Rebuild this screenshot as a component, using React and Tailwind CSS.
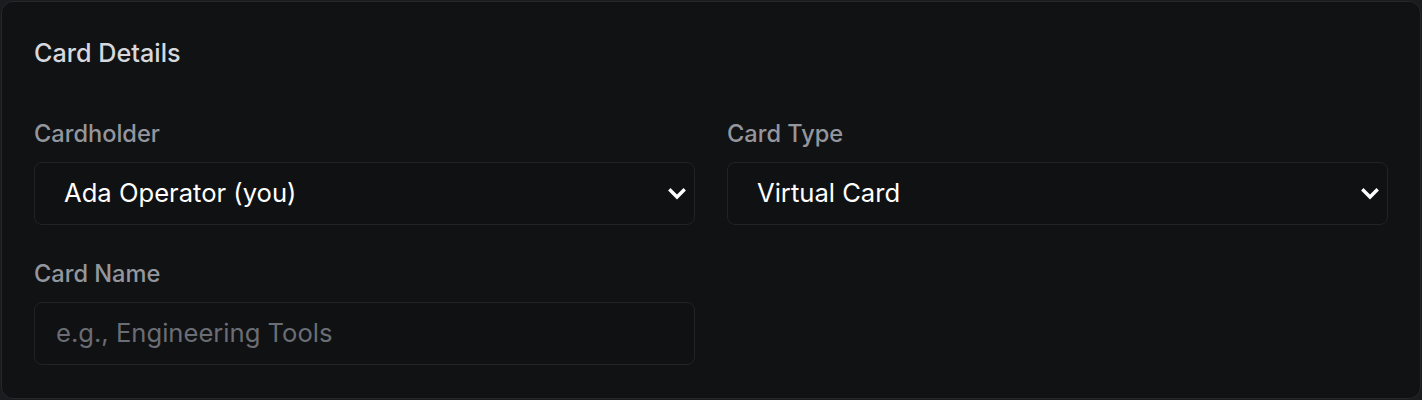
import React from "react";

function Chevron() {
  return (
    <svg width="18" height="12" viewBox="0 0 18 12" className="shrink-0">
      <polyline points="2.5,2.5 9,9 15.5,2.5" fill="none" stroke="#ffffff" strokeWidth="3.4" strokeLinecap="square" strokeLinejoin="miter" />
    </svg>
  );
}

function SelectBox({ value }) {
  return (
    <div className="flex h-[63px] items-center justify-between rounded-[8px] border border-[#222327] bg-[#101113] pl-[29px] pr-[8px] text-[25.6px] text-white">
      <span>{value}</span>
      <Chevron />
    </div>
  );
}

function Label({ children }) {
  return <div className="mb-[13px] h-[30px] text-[23.6px] leading-[30px] font-medium text-[#94969d]">{children}</div>;
}

export default function App() {
  return (
    <div className="h-[400px] w-[1422px] bg-[#1b1c1f] p-px" style={{ fontFamily: "Inter, 'Noto Sans', sans-serif" }}>
      <div className="h-[398px] rounded-[12px] border border-[#26272b] bg-[#111214] px-[32px] pt-[32px]">
        <h2 className="h-[38px] text-[25.2px] leading-[38px] font-medium text-[#d6d8dd]">Card Details</h2>
        <div className="mt-[47px] grid grid-cols-2 gap-x-[32px] gap-y-[34px]">
          <div>
            <Label>Cardholder</Label>
            <SelectBox value="Ada Operator (you)" />
          </div>
          <div>
            <Label>Card Type</Label>
            <SelectBox value="Virtual Card" />
          </div>
          <div>
            <Label>Card Name</Label>
            <div className="flex h-[63px] items-center rounded-[8px] border border-[#222327] bg-[#101113] px-[21px] text-[25.6px] text-[#6b6d74]">
              e.g., Engineering Tools
            </div>
          </div>
        </div>
      </div>
    </div>
  );
}
